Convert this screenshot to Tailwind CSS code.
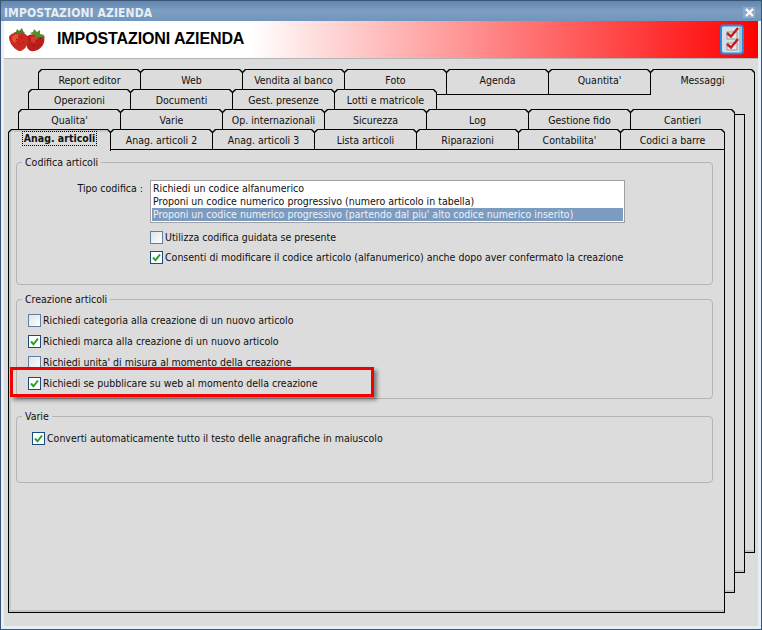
<!DOCTYPE html>
<html lang="it">
<head>
<meta charset="UTF-8">
<title>Impostazioni azienda</title>
<script src="https://cdn.jsdelivr.net/npm/@tailwindcss/browser@4"></script>
</head>
<body class="bg-[#dcdcdc]">
<div class="relative w-[762px] h-[630px] flex flex-col border border-[#3a5674] text-[10.5px] leading-[13px] text-[#101010] font-['DejaVu_Sans_Condensed','DejaVu_Sans',sans-serif]">

  <!-- Title bar -->
  <div class="h-[20px] shrink-0 flex items-center justify-between pl-[3px] pr-[6px] pt-[2px] bg-gradient-to-b from-[#5f87b1] via-[#7f9dc1] to-[#7096bd]">
    <span class="text-[12px] leading-[16px] pt-[2px] font-bold text-[#e6eef6] tracking-[0.1px]">IMPOSTAZIONI AZIENDA</span>
    <span class="w-[12px] h-[11px] flex items-center justify-center bg-[#8fabca]">
      <svg width="9" height="9" viewBox="0 0 9 9"><path d="M1 1l7 7M8 1l-7 7" stroke="#fff" stroke-width="2.2"/></svg>
    </span>
  </div>

  <div class="flex-1 flex flex-col border-x-[3px] border-b-[3px] border-[#e8eef4]">
    <!-- Header -->
    <div class="h-[38px] shrink-0 flex items-center justify-between pl-[5px] pr-[13px] border-b border-[#b4b4b4] bg-[linear-gradient(90deg,#fff_246px,#f00_100%)]">
      <div class="flex items-center">
        <svg width="38" height="26" viewBox="0 0 38 26">
          <path d="M18 9c3-2 11-3 15-1 3 2 3 6 1 10-2 3-6 6-9 6-3 1-6-1-7-4z" fill="#b81f1a"/>
          <path d="M0 10c1-3 6-5 10-5 5 0 9 3 9 7 0 4-1 8-4 10-2 2-5 3-7 1C4 21 0 15 0 10z" fill="#cb2a20"/>
          <path d="M3 10c1-2 4-3 6-3 1 3-1 8-4 9-2-2-2-4-2-6z" fill="#e4503c"/>
          <path d="M22 10c2-1 5-1 7 0-1 3-3 6-5 6-2-1-3-4-2-6z" fill="#d43a2c"/>
          <path d="M4 5h3l1-3 2 2 3-3 1 3 2 2-5 1-4-1z" fill="#4d7a2a"/>
          <path d="M21 6l3-1 1-3 3 3 3-2v4l4 1 1 3-4-1-4 1-3-3z" fill="#5c8a30"/>
          <g fill="#7e1410"><rect x="7" y="12" width="1" height="1"/><rect x="12" y="10" width="1" height="1"/><rect x="10" y="16" width="1" height="1"/><rect x="14" y="15" width="1" height="1"/><rect x="27" y="13" width="1" height="1"/><rect x="31" y="11" width="1" height="1"/><rect x="24" y="18" width="1" height="1"/><rect x="29" y="18" width="1" height="1"/></g>
        </svg>
        <span class="ml-[10px] -mt-px text-[16px] leading-[20px] font-bold text-black tracking-[-0.1px] font-['Liberation_Sans',sans-serif]">IMPOSTAZIONI AZIENDA</span>
      </div>
      <svg width="25" height="31" viewBox="0 0 25 31">
        <path d="M3 1.5h17q3 0 3 3v22q0 3-3 3H4q-3 0-3-3V4.500q0-3 2-3z" fill="#d3dfeb" stroke="#2a8ae0" stroke-width="2"/>
        <path d="M19 3h2q1 0 1 2v22q0 1-1 1h-2z" fill="#a9bfd6"/>
        <rect x="7" y="8" width="10" height="7" fill="#e8e8e8" stroke="#9a9a9a"/>
        <rect x="7" y="19" width="10" height="7" fill="#e8e8e8" stroke="#9a9a9a"/>
        <path d="M7 9l4 3.500 7-8.500M7 20l4 3.500 7-8.500" fill="none" stroke="#c41c1c" stroke-width="2.400"/>
      </svg>
    </div>

    <!-- Stacked tab sheets -->
    <div class="relative flex-1 bg-[#dcdcdc]">

      <div class="absolute left-[34px] top-[10px] w-[717px]">
        <div class="flex items-start relative z-10 h-[25px] [&>div]:relative [&>div]:shrink-0 [&>div]:w-[103px] [&>div]:-mr-px [&>div]:h-[25px] [&>div]:bg-black [&>div]:[clip-path:polygon(3px_0,calc(100%_-_3px)_0,100%_3px,100%_100%,0_100%,0_3px)] [&>div>span]:block [&>div>span]:mx-px [&>div>span]:mt-px [&>div>span]:h-full [&>div>span]:bg-[#dcdcdc] [&>div>span]:text-center [&>div>span]:leading-[21px] [&>div>span]:[clip-path:polygon(3px_0,calc(100%_-_3px)_0,100%_3px,100%_100%,0_100%,0_3px)]">
          <div><span>Report editor</span></div>
          <div><span>Web</span></div>
          <div><span>Vendita al banco</span></div>
          <div><span>Foto</span></div>
          <div><span>Agenda</span></div>
          <div><span>Quantita'</span></div>
          <div class="w-[105px]! h-[26px]! mr-0!"><span>Messaggi</span></div>
        </div>
        <div class="h-[459px] border border-black bg-[#dcdcdc] shadow-[inset_0_-2px_0_#c4c4c4]"></div>
      </div>

      <div class="absolute left-[24px] top-[30px] w-[717px]">
        <div class="flex items-start relative z-10 h-[25px] [&>div]:relative [&>div]:shrink-0 [&>div]:w-[103px] [&>div]:-mr-px [&>div]:h-[25px] [&>div]:bg-black [&>div]:[clip-path:polygon(3px_0,calc(100%_-_3px)_0,100%_3px,100%_100%,0_100%,0_3px)] [&>div>span]:block [&>div>span]:mx-px [&>div>span]:mt-px [&>div>span]:h-full [&>div>span]:bg-[#dcdcdc] [&>div>span]:text-center [&>div>span]:leading-[21px] [&>div>span]:[clip-path:polygon(3px_0,calc(100%_-_3px)_0,100%_3px,100%_100%,0_100%,0_3px)]">
          <div><span>Operazioni</span></div>
          <div><span>Documenti</span></div>
          <div><span>Gest. presenze</span></div>
          <div><span>Lotti e matricole</span></div>
        </div>
        <div class="h-[459px] border border-black bg-[#dcdcdc] shadow-[inset_0_-2px_0_#c4c4c4]"></div>
      </div>

      <div class="absolute left-[14px] top-[50px] w-[717px]">
        <div class="flex items-start relative z-10 h-[25px] [&>div]:relative [&>div]:shrink-0 [&>div]:w-[103px] [&>div]:-mr-px [&>div]:h-[25px] [&>div]:bg-black [&>div]:[clip-path:polygon(3px_0,calc(100%_-_3px)_0,100%_3px,100%_100%,0_100%,0_3px)] [&>div>span]:block [&>div>span]:mx-px [&>div>span]:mt-px [&>div>span]:h-full [&>div>span]:bg-[#dcdcdc] [&>div>span]:text-center [&>div>span]:leading-[21px] [&>div>span]:[clip-path:polygon(3px_0,calc(100%_-_3px)_0,100%_3px,100%_100%,0_100%,0_3px)]">
          <div><span>Qualita'</span></div>
          <div><span>Varie</span></div>
          <div><span>Op. internazionali</span></div>
          <div><span>Sicurezza</span></div>
          <div><span>Log</span></div>
          <div><span>Gestione fido</span></div>
          <div class="w-[105px]! h-[26px]! mr-0!"><span>Cantieri</span></div>
        </div>
        <div class="h-[459px] border border-black bg-[#dcdcdc] shadow-[inset_0_-2px_0_#c4c4c4]"></div>
      </div>

      <div class="absolute left-[4px] top-[70px] w-[717px]">
        <div class="flex items-start relative z-10 h-[20px] [&>div]:relative [&>div]:shrink-0 [&>div]:w-[103px] [&>div]:-mr-px [&>div]:h-[20px] [&>div]:bg-black [&>div]:[clip-path:polygon(3px_0,calc(100%_-_3px)_0,100%_3px,100%_100%,0_100%,0_3px)] [&>div>span]:block [&>div>span]:mx-px [&>div>span]:mt-px [&>div>span]:h-full [&>div>span]:bg-[#dcdcdc] [&>div>span]:text-center [&>div>span]:leading-[21px] [&>div>span]:[clip-path:polygon(3px_0,calc(100%_-_3px)_0,100%_3px,100%_100%,0_100%,0_3px)]">
          <div class="h-[22px]!"><span class="font-bold pt-[2px] leading-[13px]! shadow-[inset_2px_2px_0_#c8c8c8]"><b class="inline-block font-bold leading-[13px] px-px outline-1 outline-dotted outline-black">Anag. articoli</b></span></div>
          <div><span>Anag. articoli 2</span></div>
          <div><span>Anag. articoli 3</span></div>
          <div><span>Lista articoli</span></div>
          <div><span>Riparazioni</span></div>
          <div><span>Contabilita'</span></div>
          <div class="w-[105px]! mr-0!"><span>Codici a barre</span></div>
        </div>

        <!-- Active page -->
        <div class="h-[464px] border border-black bg-[#dcdcdc] shadow-[inset_2px_0_0_#c8c8c8,inset_0_-2px_0_#c4c4c4] pl-[7px] pt-[12px]">

          <div class="relative w-[697px] h-[123px] border border-[#b4b4b4] rounded-[4px] pt-[17px]">
            <span class="absolute -top-[7px] left-[5px] px-[3px] bg-[#dcdcdc]">Codifica articoli</span>
            <div class="flex items-start">
              <span class="w-[126px] text-right pt-[2px]">Tipo codifica :</span>
              <div class="ml-[7px] w-[475px] h-[43px] border border-[#a0a0a0] bg-white p-px">
                <div class="h-[13px] pl-[1px]">Richiedi un codice alfanumerico</div>
                <div class="h-[13px] pl-[1px]">Proponi un codice numerico progressivo (numero articolo in tabella)</div>
                <div class="h-[13px] pl-[1px] bg-[#7b9bc0] text-[#eef2f7]">Proponi un codice numerico progressivo (partendo dal piu' alto codice numerico inserito)</div>
              </div>
            </div>
            <div class="pl-[133px] pt-[8px] flex flex-col gap-[7px]">
              <label class="flex items-center gap-[2px] h-[13px]">
                <span class="w-[13px] h-[13px] border border-[#5f7f9f] bg-gradient-to-br from-[#dfe3e8] to-white"></span>
                Utilizza codifica guidata se presente
              </label>
              <label class="flex items-center gap-[2px] h-[13px]">
                <span class="w-[13px] h-[13px] border border-[#1c4a7c] bg-white flex items-center justify-center"><svg width="11" height="11" viewBox="0 0 11 11"><path d="M2 5.500l2.500 2.800L9 2.500" fill="none" stroke="#22a028" stroke-width="2"/></svg></span>
                Consenti di modificare il codice articolo (alfanumerico) anche dopo aver confermato la creazione
              </label>
            </div>
          </div>

          <div class="relative w-[697px] h-[100px] mt-[14px] border border-[#b4b4b4] rounded-[4px] pl-[11px] pt-[14px] flex flex-col gap-[8px]">
            <span class="absolute -top-[7px] left-[5px] px-[3px] bg-[#dcdcdc]">Creazione articoli</span>
            <label class="flex items-center gap-[2px] h-[13px]">
              <span class="w-[13px] h-[13px] border border-[#5f7f9f] bg-gradient-to-br from-[#dfe3e8] to-white"></span>
              Richiedi categoria alla creazione di un nuovo articolo
            </label>
            <label class="flex items-center gap-[2px] h-[13px]">
              <span class="w-[13px] h-[13px] border border-[#1c4a7c] bg-white flex items-center justify-center"><svg width="11" height="11" viewBox="0 0 11 11"><path d="M2 5.500l2.500 2.800L9 2.500" fill="none" stroke="#22a028" stroke-width="2"/></svg></span>
              Richiedi marca alla creazione di un nuovo articolo
            </label>
            <label class="flex items-center gap-[2px] h-[13px]">
              <span class="w-[13px] h-[13px] border border-[#5f7f9f] bg-gradient-to-br from-[#dfe3e8] to-white"></span>
              Richiedi unita' di misura al momento della creazione
            </label>
            <label class="flex items-center gap-[2px] h-[13px]">
              <span class="w-[13px] h-[13px] border border-[#1c4a7c] bg-white flex items-center justify-center"><svg width="11" height="11" viewBox="0 0 11 11"><path d="M2 5.500l2.500 2.800L9 2.500" fill="none" stroke="#22a028" stroke-width="2"/></svg></span>
              Richiedi se pubblicare su web al momento della creazione
            </label>
          </div>

          <div class="relative w-[697px] h-[67px] mt-[17px] border border-[#b4b4b4] rounded-[4px] pl-[15px] pt-[15px]">
            <span class="absolute -top-[7px] left-[5px] px-[3px] bg-[#dcdcdc]">Varie</span>
            <label class="flex items-center gap-[2px] h-[13px]">
              <span class="w-[13px] h-[13px] border border-[#1c4a7c] bg-white flex items-center justify-center"><svg width="11" height="11" viewBox="0 0 11 11"><path d="M2 5.500l2.500 2.800L9 2.500" fill="none" stroke="#22a028" stroke-width="2"/></svg></span>
              Converti automaticamente tutto il testo delle anagrafiche in maiuscolo
            </label>
          </div>
        </div>
      </div>
    </div>
  </div>

  <!-- Red highlight drawn over the screenshot -->
  <div class="absolute left-[9px] top-[366px] w-[364px] h-[30px] border-[3px] border-[#f00000] shadow-[3px_3px_4px_rgba(0,0,0,0.45)]"></div>
</div>
</body>
</html>
